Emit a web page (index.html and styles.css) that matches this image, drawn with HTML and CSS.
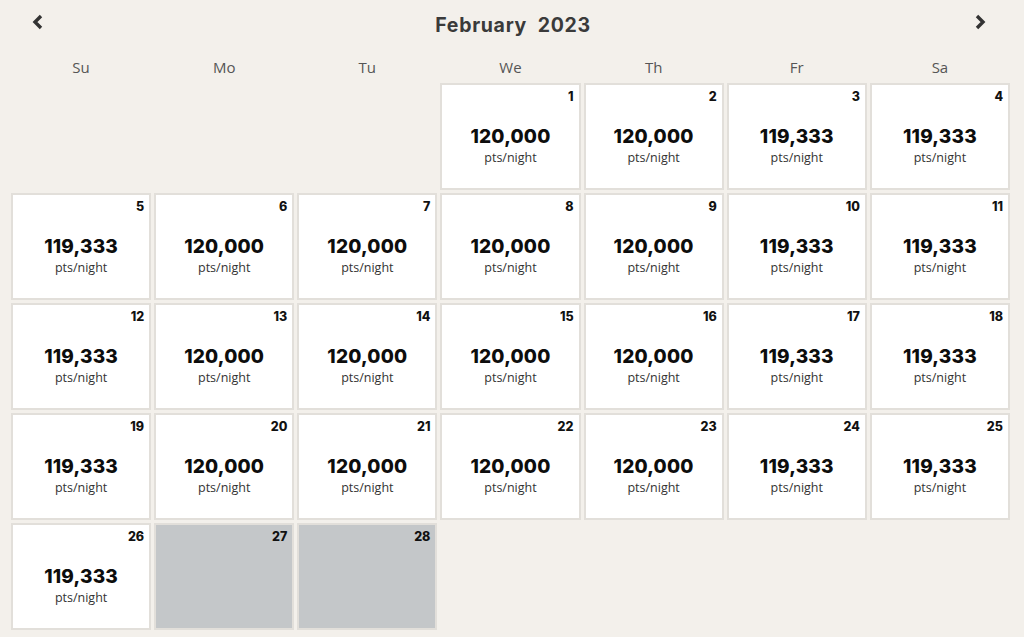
FILE: index.html
```html
<!DOCTYPE html>
<html>
<head>
<meta charset="utf-8">
<link rel="stylesheet" href="styles.css">
</head>
<body>
<div class="cal">
  <div class="head">
    <button class="nav" aria-label="Previous month"><svg width="14" height="16" viewBox="0 0 14 16"><polyline points="10,2 4,8 10,14" fill="none" stroke="#333" stroke-width="3.4" stroke-linejoin="miter"/></svg></button>
    <div class="title">February&nbsp; 2023</div>
    <button class="nav" aria-label="Next month"><svg width="14" height="16" viewBox="0 0 14 16"><polyline points="4,2 10,8 4,14" fill="none" stroke="#333" stroke-width="3.4" stroke-linejoin="miter"/></svg></button>
  </div>
  <div class="weekdays">
    <div>Su</div><div>Mo</div><div>Tu</div><div>We</div><div>Th</div><div>Fr</div><div>Sa</div>
  </div>
  <div class="grid">
    <div class="blank"></div><div class="blank"></div><div class="blank"></div>
    <div class="cell"><div class="day">1</div><div class="price">120,000</div><div class="unit">pts/night</div></div>
    <div class="cell"><div class="day">2</div><div class="price">120,000</div><div class="unit">pts/night</div></div>
    <div class="cell"><div class="day">3</div><div class="price">119,333</div><div class="unit">pts/night</div></div>
    <div class="cell"><div class="day">4</div><div class="price">119,333</div><div class="unit">pts/night</div></div>

    <div class="cell"><div class="day">5</div><div class="price">119,333</div><div class="unit">pts/night</div></div>
    <div class="cell"><div class="day">6</div><div class="price">120,000</div><div class="unit">pts/night</div></div>
    <div class="cell"><div class="day">7</div><div class="price">120,000</div><div class="unit">pts/night</div></div>
    <div class="cell"><div class="day">8</div><div class="price">120,000</div><div class="unit">pts/night</div></div>
    <div class="cell"><div class="day">9</div><div class="price">120,000</div><div class="unit">pts/night</div></div>
    <div class="cell"><div class="day">10</div><div class="price">119,333</div><div class="unit">pts/night</div></div>
    <div class="cell"><div class="day">11</div><div class="price">119,333</div><div class="unit">pts/night</div></div>

    <div class="cell"><div class="day">12</div><div class="price">119,333</div><div class="unit">pts/night</div></div>
    <div class="cell"><div class="day">13</div><div class="price">120,000</div><div class="unit">pts/night</div></div>
    <div class="cell"><div class="day">14</div><div class="price">120,000</div><div class="unit">pts/night</div></div>
    <div class="cell"><div class="day">15</div><div class="price">120,000</div><div class="unit">pts/night</div></div>
    <div class="cell"><div class="day">16</div><div class="price">120,000</div><div class="unit">pts/night</div></div>
    <div class="cell"><div class="day">17</div><div class="price">119,333</div><div class="unit">pts/night</div></div>
    <div class="cell"><div class="day">18</div><div class="price">119,333</div><div class="unit">pts/night</div></div>

    <div class="cell"><div class="day">19</div><div class="price">119,333</div><div class="unit">pts/night</div></div>
    <div class="cell"><div class="day">20</div><div class="price">120,000</div><div class="unit">pts/night</div></div>
    <div class="cell"><div class="day">21</div><div class="price">120,000</div><div class="unit">pts/night</div></div>
    <div class="cell"><div class="day">22</div><div class="price">120,000</div><div class="unit">pts/night</div></div>
    <div class="cell"><div class="day">23</div><div class="price">120,000</div><div class="unit">pts/night</div></div>
    <div class="cell"><div class="day">24</div><div class="price">119,333</div><div class="unit">pts/night</div></div>
    <div class="cell"><div class="day">25</div><div class="price">119,333</div><div class="unit">pts/night</div></div>

    <div class="cell"><div class="day">26</div><div class="price">119,333</div><div class="unit">pts/night</div></div>
    <div class="cell unavailable"><div class="day">27</div></div>
    <div class="cell unavailable"><div class="day">28</div></div>
  </div>
</div>
</body>
</html>
```
FILE: styles.css
```css
html, body {
  margin: 0;
  padding: 0;
  background: #f3f0eb;
}
body {
  font-family: "Open Sans", "Liberation Sans", sans-serif;
  color: #222;
}
.cal {
  padding: 0 14px 0 11px;
}
.head {
  height: 49px;
  display: flex;
  align-items: center;
  justify-content: space-between;
  padding: 0 23px 0 20px;
}
.nav {
  background: none;
  border: 0;
  padding: 0;
  width: 14px;
  height: 16px;
  display: flex;
  margin-top: -5px;
}
.title {
  font-family: Inter, "Liberation Sans", sans-serif;
  font-weight: 700;
  font-size: 19.5px;
  color: #3a3a3a;
  letter-spacing: 0.7px;
  margin-left: 8px;
}
.weekdays {
  display: grid;
  grid-template-columns: repeat(7, 1fr);
  column-gap: 3px;
  height: 34px;
}
.weekdays div {
  text-align: center;
  font-size: 15px;
  color: #555;
  line-height: 36px;
}
.grid {
  display: grid;
  grid-template-columns: repeat(7, 1fr);
  grid-auto-rows: 107px;
  gap: 3px;
}
.cell {
  background: #fff;
  border: 2px solid #e2dfda;
  display: flex;
  flex-direction: column;
  align-items: center;
  padding-top: 4px;
}
.cell.unavailable {
  background: #c4c7c9;
}
.day {
  align-self: flex-end;
  padding-right: 5px;
  font-family: Inter, "Liberation Sans", sans-serif;
  font-weight: 800;
  font-size: 12.5px;
  line-height: 16px;
  color: #111;
}
.price {
  margin-top: 20px;
  font-family: Inter, "Liberation Sans", sans-serif;
  font-weight: 800;
  font-size: 19px;
  line-height: 24px;
  color: #0d0d0d;
  letter-spacing: 0.2px;
}
.unit {
  margin-top: 0;
  font-size: 12.5px;
  line-height: 18px;
  color: #333;
}
```
